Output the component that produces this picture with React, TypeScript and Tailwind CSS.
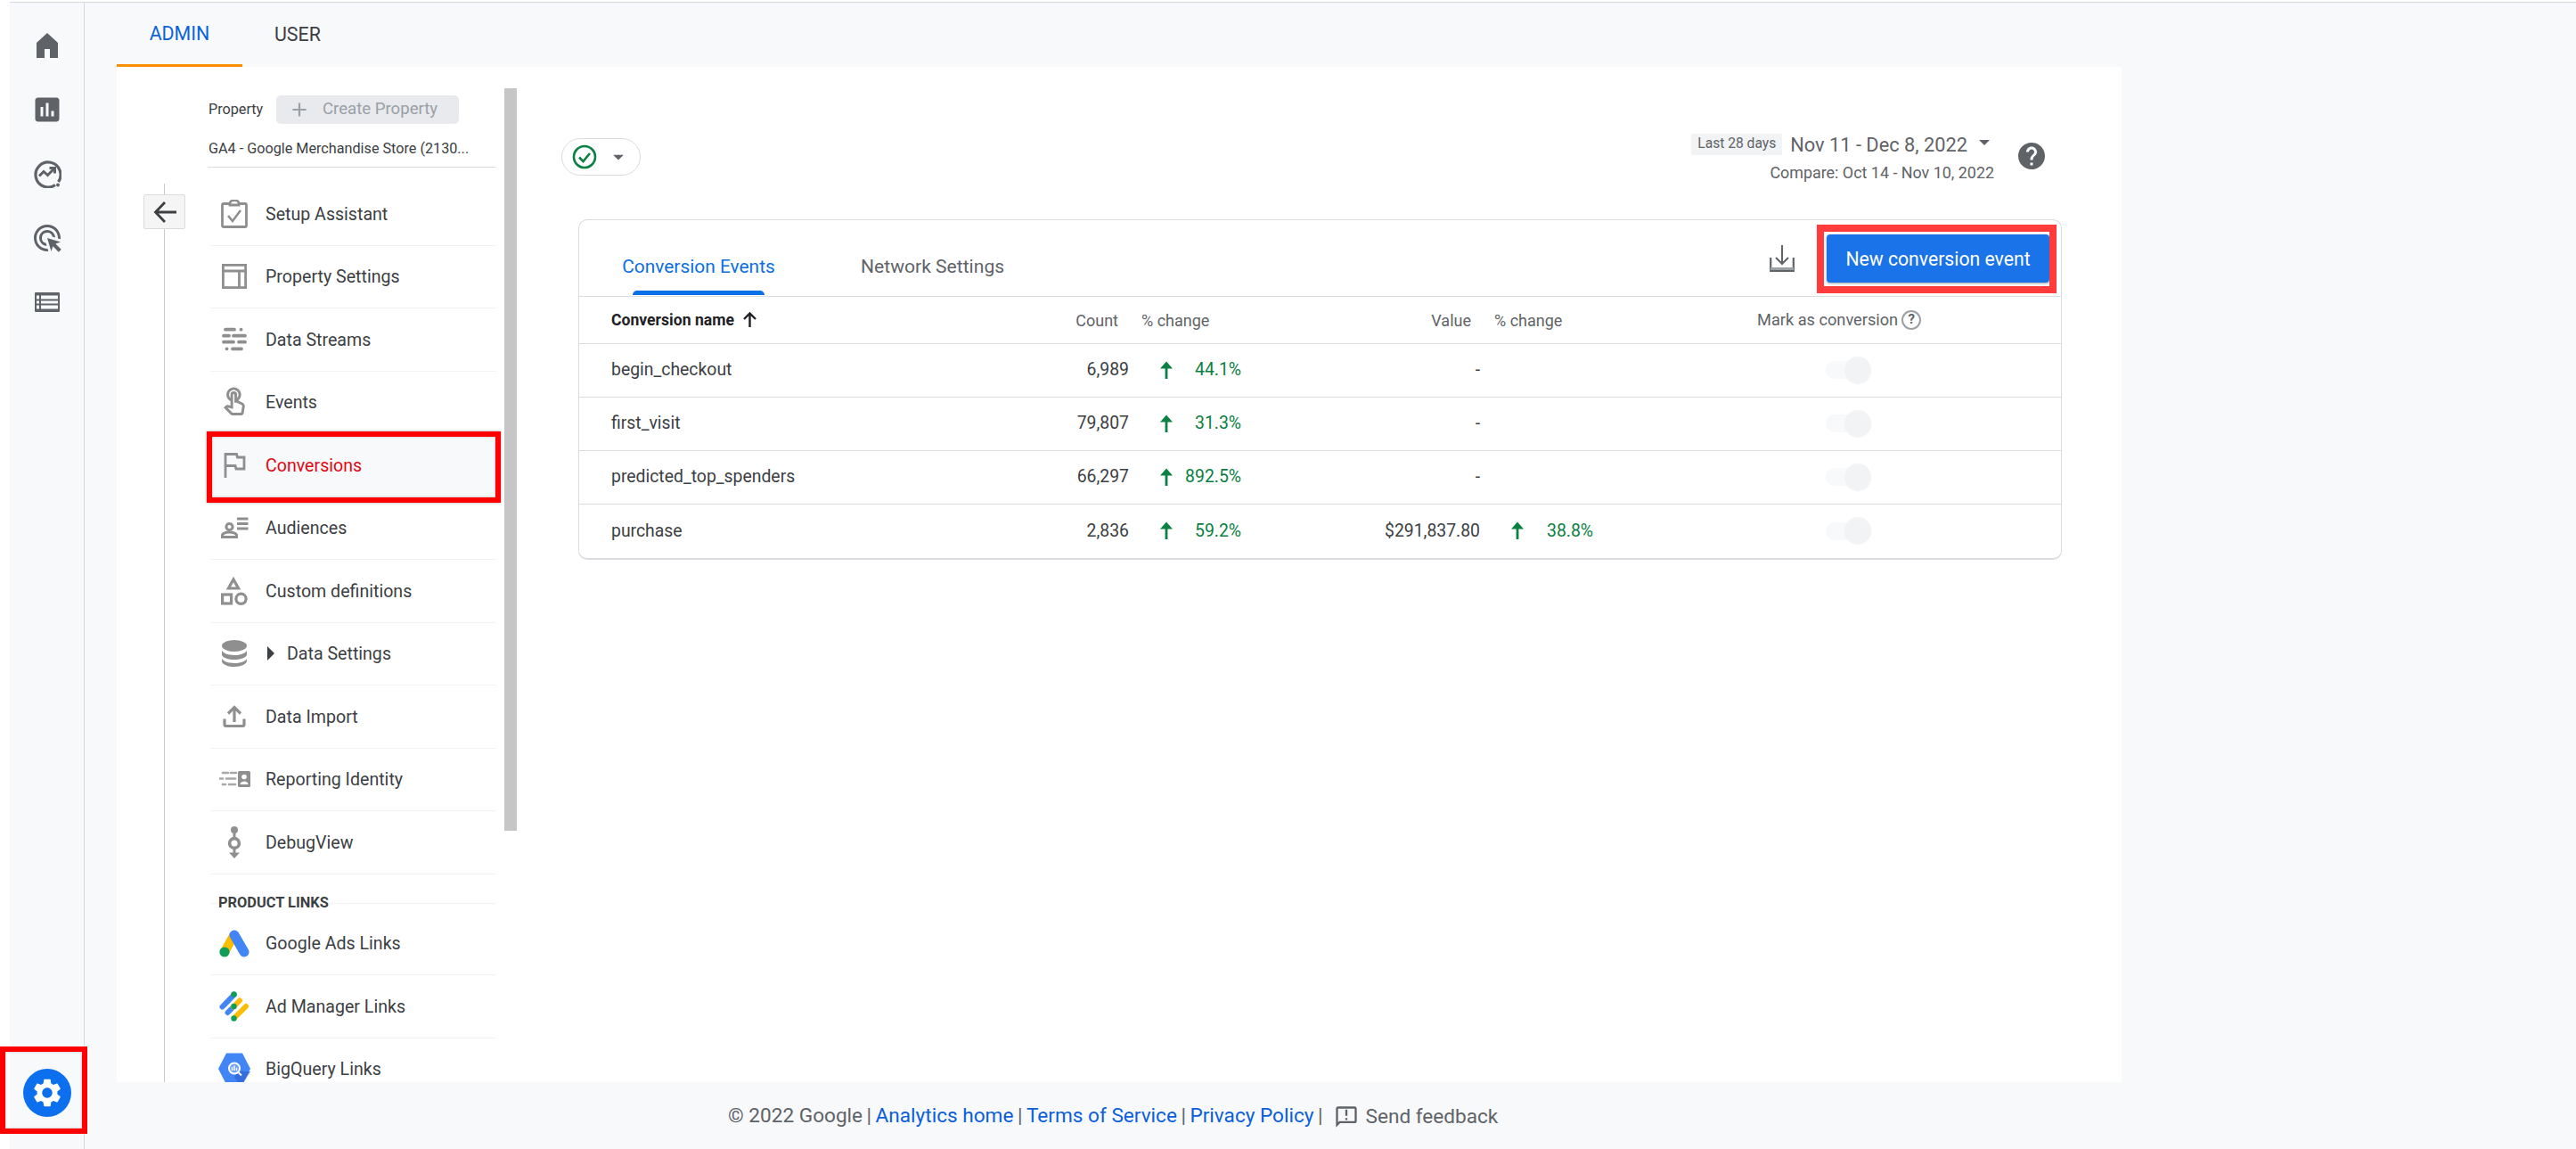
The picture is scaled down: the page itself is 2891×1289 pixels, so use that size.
import React from "react";
import {
  MdAssessment, MdAdsClick, MdSettings, MdOutlineTouchApp, MdAdd,
  MdHelp, MdArrowDropDown, MdOutlineAnnouncement,
} from "react-icons/md";

const G = "#8f8f8f";

function HomeIcon() {
  return (
    <svg width="24" height="28" viewBox="0 0 24 28" fill="#5f6368">
      <path d="M0 11L12 0l12 11v17h-9V18H9v10H0z" />
    </svg>
  );
}
function Clipboard() {
  return (
    <svg width="30" height="32" viewBox="0 0 30 32" fill="none" stroke={G} strokeWidth="2.800">
      <path d="M10 4.500H3a1.500 1.500 0 0 0-1.500 1.500v23a1.500 1.500 0 0 0 1.500 1.500h24a1.500 1.500 0 0 0 1.500-1.500V6A1.500 1.500 0 0 0 27 4.500h-7" />
      <path d="M10 6V4a5 3.400 0 0 1 10 0v2z" fill="#fff" />
      <path d="M8 18l5 6 9-12" strokeWidth="2.600" />
    </svg>
  );
}
function Layout() {
  return (
    <svg width="28" height="28" viewBox="0 0 28 28" fill="none" stroke={G} strokeWidth="2.800">
      <rect x="1.400" y="1.400" width="25.200" height="25.200" />
      <path d="M1 8h26M19.500 8v19" />
    </svg>
  );
}
function Streams() {
  return (
    <svg width="28" height="28" viewBox="0 0 28 28" fill="none" stroke={G} strokeWidth="3.800" strokeLinecap="round">
      <path d="M4 2.700h10M21.500 2.700h.1M2 9.700h6M13 9.700h13M2 16.700h11M19 16.700h7M5.500 24.300h.1M12 24.300h10" />
    </svg>
  );
}
function Flag() {
  return (
    <svg width="26" height="28" viewBox="0 0 26 28" fill="none" stroke={G} strokeWidth="2.800">
      <path d="M3 28V1.500h12.500l1 3.500h7.500v13h-9l-1-3.500H3" />
    </svg>
  );
}
function Audience() {
  return (
    <svg width="31" height="24" viewBox="0 0 31 24" fill="none">
      <circle cx="9.500" cy="11" r="3.600" stroke={G} strokeWidth="3" />
      <path d="M1.500 22.500v-2c0-2.400 5-3.600 8-3.600s8 1.200 8 3.600v2z" stroke={G} strokeWidth="3" />
      <path d="M18 2h12.500M18 7.500h12.500M18 13h12.500" stroke={G} strokeWidth="3" />
    </svg>
  );
}
function Shapes() {
  return (
    <svg width="30" height="32" viewBox="0 0 30 32" fill="none" stroke={G} strokeWidth="3.200">
      <path d="M14 3l5.600 10H8.400z" />
      <rect x="1.600" y="20" width="10" height="10" />
      <circle cx="22.500" cy="24.800" r="5.600" />
    </svg>
  );
}
function Database() {
  return (
    <svg width="30" height="30" viewBox="0 0 30 30" fill={G}>
      <ellipse cx="15" cy="6.500" rx="14" ry="6.500" />
      <path d="M1 12c2 3.300 8 5 14 5s12-1.700 14-5v4c0 3.600-6.300 6-14 6S1 19.600 1 16z" />
      <path d="M1 21c2 3.300 8 5 14 5s12-1.700 14-5v2.500C29 27 22.700 30 15 30S1 27 1 23.500z" />
    </svg>
  );
}
function UploadIcon() {
  return (
    <svg width="26" height="25" viewBox="0 0 26 25" fill="none" stroke={G} strokeWidth="3.200">
      <path d="M2 15.500v6a2 2 0 0 0 2 2h18a2 2 0 0 0 2-2v-6" />
      <path d="M13 19V3M6 9.500L13 2.500l7 7" />
    </svg>
  );
}
function Identity() {
  return (
    <svg width="35" height="20" viewBox="0 0 35 20" fill="none">
      <path d="M4 3h6M13 3h6M1 9.500h3M8 9.500h10M4 16h3M11 16h7" stroke="#a8a8a8" strokeWidth="2.700" strokeLinecap="round" />
      <rect x="21" y="1" width="14" height="18" rx="1.500" fill={G} />
      <circle cx="28" cy="7.500" r="2.800" fill="#fff" />
      <path d="M23.500 16c0-2.200 2.400-3.400 4.500-3.400s4.500 1.200 4.500 3.400z" fill="#fff" />
    </svg>
  );
}
function Debug() {
  return (
    <svg width="16" height="36" viewBox="0 0 16 36" fill="none">
      <circle cx="8" cy="4" r="4" fill={G} />
      <path d="M8 4v28" stroke={G} strokeWidth="3" />
      <circle cx="8" cy="19" r="5.400" stroke={G} strokeWidth="3.600" fill="#fff" />
      <path d="M2 29.500h12L8 36z" fill={G} />
    </svg>
  );
}
function AdsLogo() {
  return (
    <svg width="34" height="31" viewBox="0 0 34 31" fill="none">
      <path d="M17 5L6 25" stroke="#fbbc04" strokeWidth="10" />
      <path d="M17 6l11 19" stroke="#4285f4" strokeWidth="11" strokeLinecap="round" />
      <circle cx="6" cy="25" r="5.600" fill="#0f9d58" />
    </svg>
  );
}
function ManagerLogo() {
  return (
    <svg width="34" height="34" viewBox="0 0 34 34" fill="none" strokeWidth="6" strokeLinecap="round">
      <path d="M16.700 4L3.500 17.500M16 17.500L9.500 24" stroke="#4285f4" />
      <path d="M23 10.500L16 17.500M30 17L17 30" stroke="#fbbc04" />
      <circle cx="16.500" cy="3.500" r="3.200" fill="#0f9d58" />
      <circle cx="16.500" cy="17" r="3.200" fill="#0f9d58" />
      <circle cx="16.500" cy="30.500" r="3.200" fill="#0f9d58" />
    </svg>
  );
}
function BigQueryLogo() {
  return (
    <svg width="36" height="36" viewBox="0 0 36 36" fill="none">
      <path d="M9 .5h18L36 18l-9 17.500H9L0 18z" fill="#4285f4" />
      <path d="M21.500 22l3-1 11.500 0-9 14.500h-4L18 27z" fill="#3367d6" opacity=".8" />
      <circle cx="18" cy="17.500" r="6" fill="#fff" fillOpacity=".25" stroke="#fff" strokeWidth="2" />
      <path d="M15.500 16v4M18 14.500v5.500M20.500 17v3" stroke="#fff" strokeWidth="1.400" />
      <path d="M22.500 22l3.500 3.500" stroke="#fff" strokeWidth="2" />
    </svg>
  );
}
function Explore() {
  return (
    <svg width="32" height="32" viewBox="0 0 32 32" fill="none" stroke="#5f6368">
      <path d="M28.500 25A14 14 0 1 0 25 28.500" strokeWidth="3.200" />
      <path d="M7 18.500l5-5 4.500 4 7.500-7.500M18.500 9.500h6v6" strokeWidth="3" />
      <circle cx="28" cy="28.500" r="2" fill="#5f6368" stroke="none" />
    </svg>
  );
}
function TableIcon() {
  return (
    <svg width="28" height="22" viewBox="0 0 28 22">
      <rect width="28" height="22" rx="1" fill="#5f6368" />
      <path d="M2 3.500h3v4H2zM7 3.500h19v4H7zM2 9.500h3v3H2zM7 9.500h19v3H7zM2 14.500h3v4H2zM7 14.500h19v4H7z" fill="#f8f9fb" />
    </svg>
  );
}
function BackArrow() {
  return (
    <svg width="26" height="24" viewBox="0 0 26 24" fill="none" stroke="#3c4043" strokeWidth="2.800">
      <path d="M26 12H3M13 1L2.500 12 13 23" />
    </svg>
  );
}
function UpArrow() {
  return (
    <svg width="16" height="20" viewBox="0 0 16 20" fill="none">
      <path d="M8 20V3" stroke="#0b8043" strokeWidth="2.800" />
      <path d="M1 8.500L8 .5l7 8z" fill="#0b8043" />
    </svg>
  );
}
function DownloadIcon() {
  return (
    <svg width="28" height="30" viewBox="0 0 28 30" fill="none" stroke="#5f6368" strokeWidth="2">
      <path d="M14 0v20M7 14l7 7 7-7" />
      <path d="M1.200 14v14.800h25.600V14" strokeWidth="2.200" />
      <path d="M1 26.500h26" stroke="#9aa0a6" strokeWidth="3" />
    </svg>
  );
}
function CheckCircle() {
  return (
    <svg width="28" height="28" viewBox="0 0 28 28" fill="none" stroke="#0b8043" strokeWidth="2.600">
      <circle cx="14" cy="14" r="12" />
      <path d="M8 14.500l4.500 4.500L20 10" />
    </svg>
  );
}

type Item = { icon: React.ReactNode; label: string; caret?: boolean; active?: boolean };
const items: Item[] = [
  { icon: <Clipboard />, label: "Setup Assistant" },
  { icon: <Layout />, label: "Property Settings" },
  { icon: <Streams />, label: "Data Streams" },
  { icon: <MdOutlineTouchApp size={36} color={G} />, label: "Events" },
  { icon: <Flag />, label: "Conversions", active: true },
  { icon: <Audience />, label: "Audiences" },
  { icon: <Shapes />, label: "Custom definitions" },
  { icon: <Database />, label: "Data Settings", caret: true },
  { icon: <UploadIcon />, label: "Data Import" },
  { icon: <Identity />, label: "Reporting Identity" },
  { icon: <Debug />, label: "DebugView" },
];
const links: Item[] = [
  { icon: <AdsLogo />, label: "Google Ads Links" },
  { icon: <ManagerLogo />, label: "Ad Manager Links" },
  { icon: <BigQueryLogo />, label: "BigQuery Links" },
];

function Row({ item }: { item: Item }) {
  return (
    <div className={`relative flex h-[70.5px] shrink-0 items-center border-b border-[#f1f3f4] ${item.active ? "bg-[#f8f9fa]" : ""}`}>
      <div className="mr-[8px] flex w-[54px] justify-center">{item.icon}</div>
      {item.caret && (
        <div className="ml-[2px] mr-[14px] h-0 w-0 border-y-[8px] border-l-[8px] border-y-transparent border-l-[#3c4043]" />
      )}
      <span className={`mt-[1px] text-[19.6px] ${item.active ? "text-[#e30613]" : "text-[#3c4043]"}`}>{item.label}</span>
      {item.active && (
        <div className="absolute -bottom-[7px] -left-[4px] -right-[5px] -top-[3px] border-[6px] border-[#ff0000] shadow-[0_0_3px_rgba(0,0,0,0.35),inset_0_0_3px_rgba(0,0,0,0.25)]" />
      )}
    </div>
  );
}

const rows = [
  { name: "begin_checkout", count: "6,989", pct: "44.1%", value: "-", pct2: "" },
  { name: "first_visit", count: "79,807", pct: "31.3%", value: "-", pct2: "" },
  { name: "predicted_top_spenders", count: "66,297", pct: "892.5%", value: "-", pct2: "" },
  { name: "purchase", count: "2,836", pct: "59.2%", value: "$291,837.80", pct2: "38.8%" },
];

export default function App() {
  return (
    <div className="flex h-[1289px] w-[2891px] overflow-hidden bg-white font-['Roboto',sans-serif]">
      <div className="w-[11px] shrink-0" />
      <div className="flex min-w-0 flex-1 flex-col pt-[2px]">
        <div className="flex min-h-0 flex-1 border-t border-[#d6d7e3] bg-[#f8f9fb]">
          {/* rail */}
          <div className="relative flex w-[84px] shrink-0 flex-col items-center border-r border-[#d5d8dc] pt-[30px]">
            <div className="flex h-[36px] items-center justify-center"><HomeIcon /></div>
            <div className="mt-[36px] flex h-[36px] items-center justify-center"><MdAssessment size={36} color="#5f6368" /></div>
            <div className="mt-[36px] flex h-[36px] items-center justify-center"><Explore /></div>
            <div className="mt-[36px] flex h-[36px] items-center justify-center"><MdAdsClick size={36} color="#5f6368" /></div>
            <div className="mt-[36px] flex h-[36px] items-center justify-center"><TableIcon /></div>
            <div className="mb-[36px] mt-auto flex h-[54px] w-[54px] items-center justify-center rounded-full bg-[#0b6fee]">
              <MdSettings size={38} color="#fff" />
            </div>
            <div className="absolute -left-[11px] bottom-[17px] h-[98px] w-[98px] border-[6px] border-[#ff0000] shadow-[inset_0_0_3px_rgba(0,0,0,0.25)]" />
          </div>

          {/* main */}
          <div className="flex min-w-0 flex-1 flex-col pl-[36px]">
            {/* tabs */}
            <div className="flex h-[72px] shrink-0 text-[21.4px]">
              <div className="flex h-[72px] w-[141px] items-center justify-center border-b-[3px] border-[#ff8f00] pt-[2px] text-[#0b64d8]">ADMIN</div>
              <div className="ml-[36px] flex h-[72px] items-center text-[#3c4043]">USER</div>
            </div>
            {/* panel */}
            <div className="flex h-[1139px] w-[2250px] shrink-0 overflow-hidden bg-white">
              {/* left column */}
              <div className="relative flex w-[449px] shrink-0">
                <div className="w-[102px] shrink-0">
                  <div className="mt-[131px] h-full w-[54px] border-r border-[#c9c9c9]" />
                </div>
                <div className="absolute left-[30px] top-[143px] flex h-[39px] w-[47px] items-center justify-center rounded-[2px] border border-[#dadce0] bg-[#f5f5f5]">
                  <BackArrow />
                </div>
                <div className="flex w-[324px] shrink-0 flex-col">
                  <div className="mt-[32px] flex h-[32px] shrink-0 items-center">
                    <span className="ml-[1px] mt-[1px] w-[76px] text-[16.2px] text-[#3c4043]">Property</span>
                    <div className="flex h-[32px] w-[205px] items-center rounded-[5px] bg-[#e8eaed] text-[18.6px] text-[#9aa0a6]">
                      <span className="ml-[13px] mr-[13px]"><MdAdd size={26} color="#9aa0a6" /></span>
                      Create Property
                    </div>
                  </div>
                  <div className="flex h-[48px] shrink-0 items-center whitespace-nowrap pl-[1px] pt-[8px] text-[16.2px] text-[#3c4043]">GA4 - Google Merchandise Store (2130...</div>
                  <div className="h-px shrink-0 bg-[#dadce0]" />
                  <div className="ml-[3px] mt-[17px] flex flex-col">
                    {items.map((it) => <Row key={it.label} item={it} />)}
                    <div className="flex h-[43px] shrink-0 items-center pt-[22px]">
                      <div className="h-px w-[9px] bg-[#f1f3f4]" />
                      <span className="whitespace-nowrap text-[16.4px] font-bold text-[#3c4043]">PRODUCT LINKS</span>
                      <div className="h-px flex-1 bg-[#f1f3f4]" />
                    </div>
                    {links.map((it) => <Row key={it.label} item={it} />)}
                  </div>
                </div>
                <div className="ml-[9px] mt-[24px] h-[833px] w-[14px] shrink-0 bg-[#c6c6c6]" />
              </div>

              {/* content */}
              <div className="min-w-0 flex-1 pl-[50px]">
                <div className="mt-[75px] flex h-[56px] w-[1668px] items-start justify-between">
                  <div className="mt-[5px] flex h-[42px] w-[89px] items-center rounded-full border border-[#dadce0] pl-[11px]">
                    <CheckCircle />
                    <MdArrowDropDown size={28} color="#5f6368" className="ml-[10px]" />
                  </div>
                  <div className="flex">
                    <div className="flex flex-col items-end">
                      <div className="flex h-[24px] items-center">
                        <div className="flex h-[24px] w-[102px] items-center justify-center bg-[#f1f3f4] text-[15.6px] text-[#5f6368]">Last 28 days</div>
                        <span className="ml-[9px] mt-[2px] text-[21.8px] text-[#5f6368]">Nov 11 - Dec 8, 2022</span>
                        <div className="ml-[13px] mr-[5px] mt-[-4px] h-0 w-0 border-x-[6px] border-t-[6px] border-x-transparent border-t-[#5f6368]" />
                      </div>
                      <div className="mt-[7px] text-[17.9px] text-[#5f6368]">Compare: Oct 14 - Nov 10, 2022</div>
                    </div>
                    <div className="ml-[24px] mt-[7px]"><MdHelp size={36} color="#5f6368" /></div>
                  </div>
                </div>

                <div className="ml-[19px] mt-[40px] w-[1665px] rounded-[10px] border border-b-2 border-[#dadce0]">
                  <div className="flex h-[86px] border-b border-[#dadce0]">
                    <div className="ml-[48px] flex w-[172px] flex-col items-center">
                      <span className="mt-[38px] whitespace-nowrap text-[20.9px] leading-[28px] text-[#0b6fe0]">Conversion Events</span>
                      <div className="mb-[1px] mt-auto h-[5px] w-[148px] rounded-t-[5px] bg-[#0b6fe8]" />
                    </div>
                    <span className="ml-[96px] mt-[38px] whitespace-nowrap text-[21.1px] leading-[28px] text-[#5f6368]">Network Settings</span>
                    <div className="ml-auto mr-[13px] mt-[16px] flex h-[54px] items-center gap-[36px]">
                      <DownloadIcon />
                      <div className="relative flex h-[54px] w-[250px] items-center justify-center rounded-[4px] bg-[#1a73e8] pt-[1px] text-[21.2px] text-white shadow-[0_1px_3px_rgba(60,64,67,0.5)]">
                        New conversion event
                        <div className="absolute -bottom-[12px] -left-[11px] -right-[8px] -top-[11px] border-[8px] border-[#ff3b3b]" />
                      </div>
                    </div>
                  </div>
                  <div className="grid h-[53px] grid-cols-[450px_167px_126px_268px_127px_1fr] items-center border-b border-[#dadce0] text-[18px] text-[#5f6368]">
                    <div className="flex items-center pl-[36px] text-[17.6px] font-bold text-[#202124]">
                      Conversion name
                      <svg width="17" height="17" viewBox="0 0 17 17" fill="none" className="ml-[9px]"><path d="M8.500 17V2M2 8L8.500 1.500 15 8" stroke="#202124" strokeWidth="2.400" /></svg>
                    </div>
                    <div className="pr-[12px] text-right">Count</div>
                    <div className="pl-[14px]">% change</div>
                    <div className="pr-[10px] text-right">Value</div>
                    <div className="pl-[16px]">% change</div>
                    <div className="flex items-center pl-[184px] text-[18.2px]">
                      Mark as conversion
                      <span className="ml-[4px] flex h-[22px] w-[22px] items-center justify-center rounded-full border-2 border-[#9aa0a6] text-[15px] font-bold leading-none text-[#5f6368]">?</span>
                    </div>
                  </div>
                  {rows.map((r, i) => (
                    <div key={r.name} className={`grid h-[60px] grid-cols-[450px_167px_126px_268px_127px_1fr] items-center pb-[1px] text-[19.4px] text-[#3c4043] ${i < 3 ? "border-b border-[#dadce0]" : ""}`}>
                      <div className="pl-[36px]">{r.name}</div>
                      <div className="text-right">{r.count}</div>
                      <div className="flex items-center justify-between pl-[34px] text-[#0b8043]"><UpArrow /><span>{r.pct}</span></div>
                      <div className="text-right">{r.value}</div>
                      <div className="flex items-center justify-between pl-[34px] text-[#0b8043]">{r.pct2 && <UpArrow />}<span>{r.pct2}</span></div>
                      <div className="pl-[261px]">
                        <div className="relative flex h-[31px] w-[51px] items-center">
                          <div className="h-[20px] w-[40px] rounded-full bg-[#f8f9fa]" />
                          <div className="absolute right-0 top-0 h-[31px] w-[30px] rounded-full bg-[#f1f3f4]" />
                        </div>
                      </div>
                    </div>
                  ))}
                </div>
              </div>
            </div>
            {/* footer */}
            <div className="flex h-[75px] shrink-0 items-center whitespace-nowrap pl-[686px] text-[22.6px] text-[#5f6368]">
              <span>© 2022 Google</span>
              <span className="mx-[4.5px]">|</span>
              <span className="text-[#0b5fd8]">Analytics home</span>
              <span className="mx-[4.5px]">|</span>
              <span className="text-[#0b5fd8]">Terms of Service</span>
              <span className="mx-[4.5px]">|</span>
              <span className="text-[#0b5fd8]">Privacy Policy</span>
              <span className="ml-[4.5px]">|</span>
              <MdOutlineAnnouncement size={28} color="#5f6368" className="ml-[12px] mt-[3px]" />
              <span className="ml-[8px] mt-[3px]">Send feedback</span>
            </div>
          </div>
        </div>
      </div>
    </div>
  );
}
